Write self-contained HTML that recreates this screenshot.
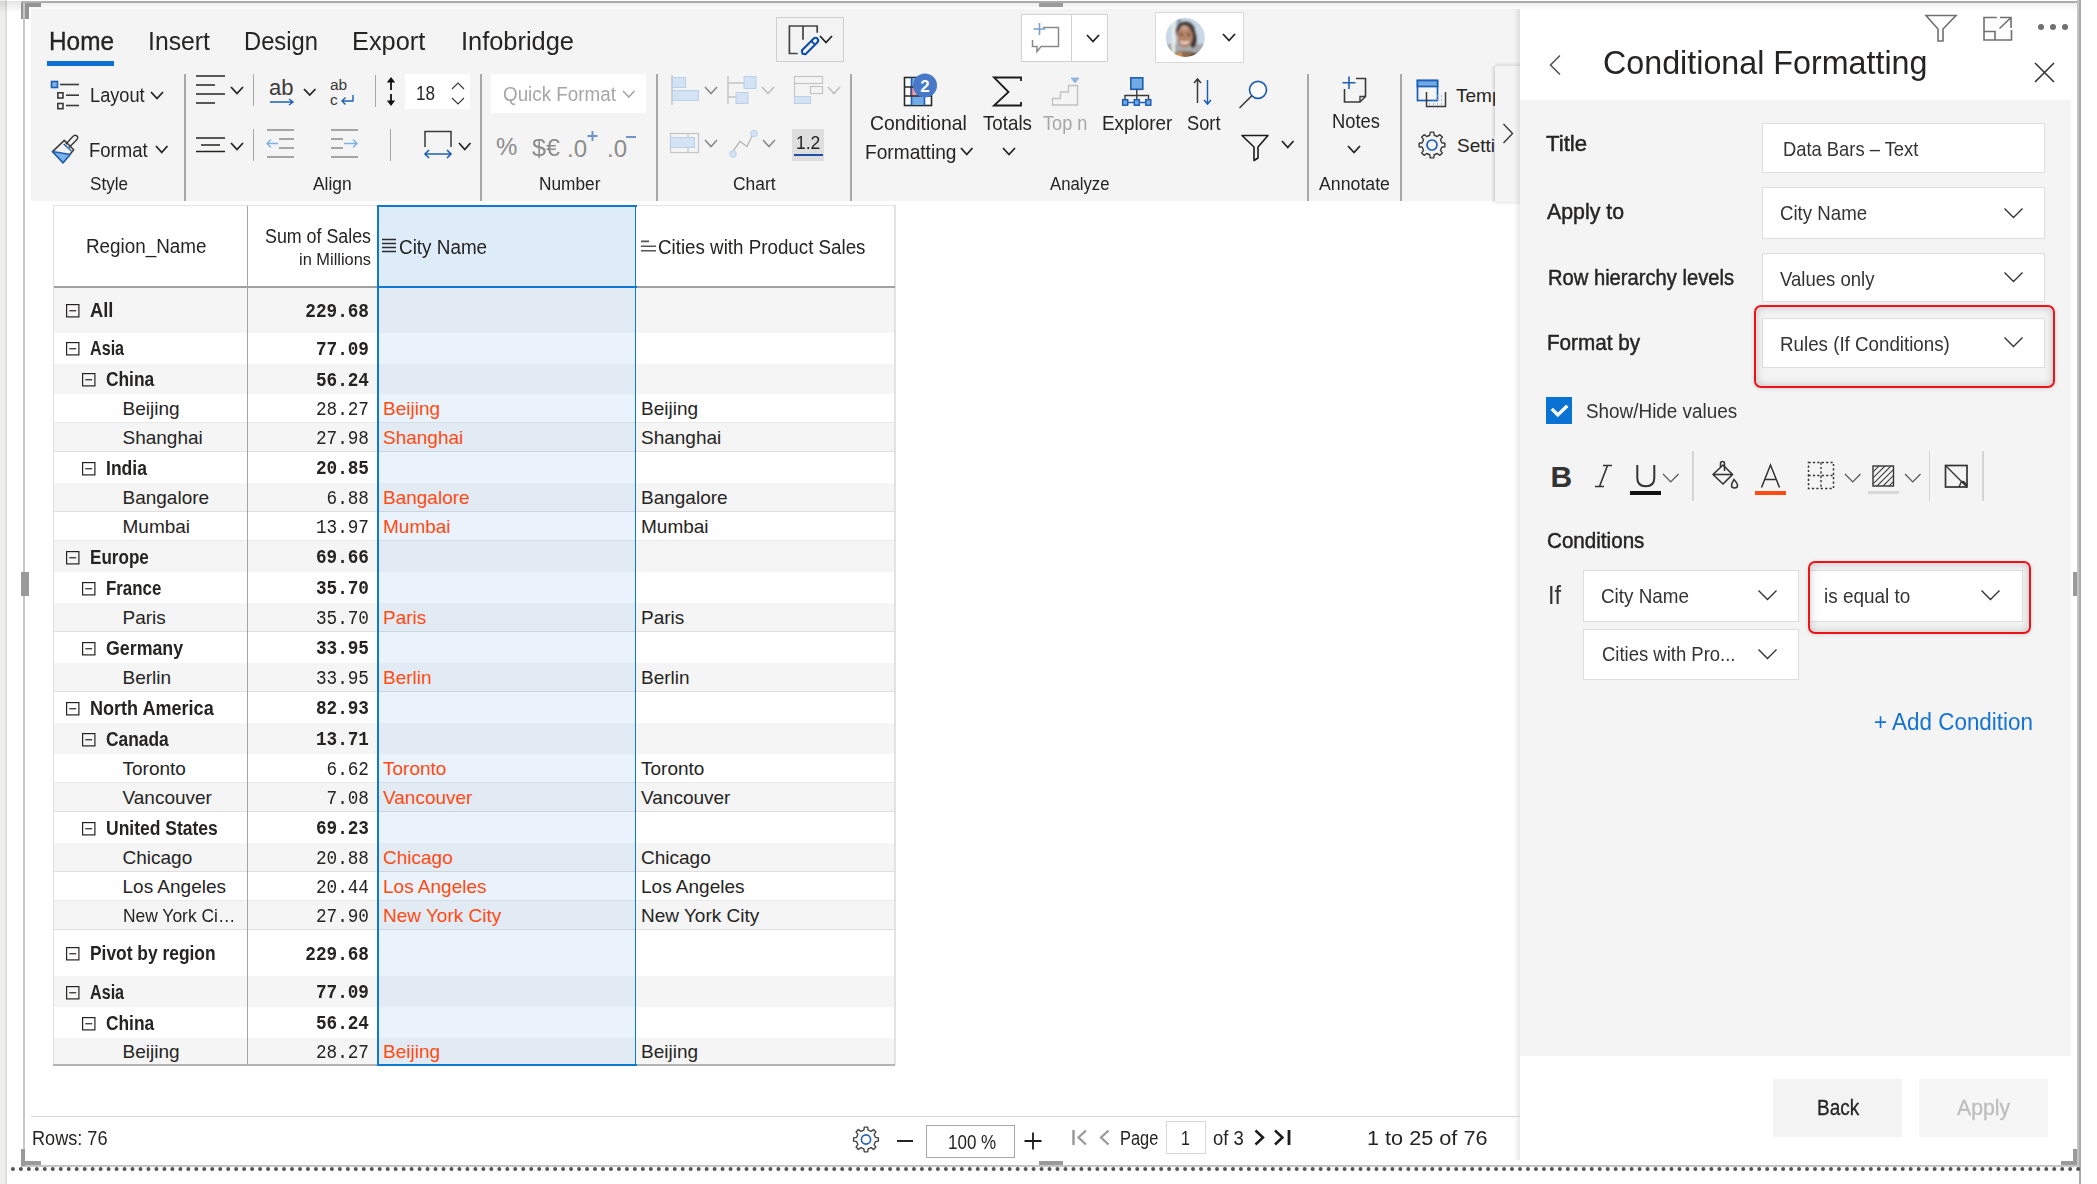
<!DOCTYPE html><html><head><meta charset="utf-8"><style>
html,body{margin:0;padding:0;}
body{width:2097px;height:1184px;position:relative;overflow:hidden;background:#fff;font-family:'Liberation Sans', sans-serif;color:#252423;}
.a{position:absolute;}
.t{position:absolute;white-space:nowrap;}
svg.a{overflow:visible;}
</style></head><body>
<div class="a" style="left:0px;top:0px;width:5px;height:1184px;background:#efeeec;"></div>
<div class="a" style="left:5px;top:0px;width:2px;height:1184px;background:#dedede;"></div>
<div class="a" style="left:21px;top:1px;width:2060px;height:2px;background:#ababab;"></div>
<div class="a" style="left:23px;top:3px;width:2px;height:1163px;background:#c8c8c8;"></div>
<div class="a" style="left:2077px;top:0px;width:2px;height:1165px;background:#c4c4c4;"></div>
<div class="a" style="left:2079px;top:0px;width:2px;height:1184px;background:#a9a9a9;"></div>
<div class="a" style="left:21px;top:1165px;width:2058px;height:2px;background:#c6c6c6;"></div>
<svg class="a" style="left:0;top:0" width="2097" height="1184" viewBox="0 0 2097 1184"><g fill="#555"><circle cx="12.90" cy="1169" r="2"/><circle cx="20.87" cy="1169" r="2"/><circle cx="28.85" cy="1169" r="2"/><circle cx="36.82" cy="1169" r="2"/><circle cx="44.80" cy="1169" r="2"/><circle cx="52.77" cy="1169" r="2"/><circle cx="60.74" cy="1169" r="2"/><circle cx="68.72" cy="1169" r="2"/><circle cx="76.69" cy="1169" r="2"/><circle cx="84.67" cy="1169" r="2"/><circle cx="92.64" cy="1169" r="2"/><circle cx="100.61" cy="1169" r="2"/><circle cx="108.59" cy="1169" r="2"/><circle cx="116.56" cy="1169" r="2"/><circle cx="124.54" cy="1169" r="2"/><circle cx="132.51" cy="1169" r="2"/><circle cx="140.48" cy="1169" r="2"/><circle cx="148.46" cy="1169" r="2"/><circle cx="156.43" cy="1169" r="2"/><circle cx="164.41" cy="1169" r="2"/><circle cx="172.38" cy="1169" r="2"/><circle cx="180.35" cy="1169" r="2"/><circle cx="188.33" cy="1169" r="2"/><circle cx="196.30" cy="1169" r="2"/><circle cx="204.28" cy="1169" r="2"/><circle cx="212.25" cy="1169" r="2"/><circle cx="220.22" cy="1169" r="2"/><circle cx="228.20" cy="1169" r="2"/><circle cx="236.17" cy="1169" r="2"/><circle cx="244.15" cy="1169" r="2"/><circle cx="252.12" cy="1169" r="2"/><circle cx="260.09" cy="1169" r="2"/><circle cx="268.07" cy="1169" r="2"/><circle cx="276.04" cy="1169" r="2"/><circle cx="284.02" cy="1169" r="2"/><circle cx="291.99" cy="1169" r="2"/><circle cx="299.96" cy="1169" r="2"/><circle cx="307.94" cy="1169" r="2"/><circle cx="315.91" cy="1169" r="2"/><circle cx="323.89" cy="1169" r="2"/><circle cx="331.86" cy="1169" r="2"/><circle cx="339.83" cy="1169" r="2"/><circle cx="347.81" cy="1169" r="2"/><circle cx="355.78" cy="1169" r="2"/><circle cx="363.76" cy="1169" r="2"/><circle cx="371.73" cy="1169" r="2"/><circle cx="379.70" cy="1169" r="2"/><circle cx="387.68" cy="1169" r="2"/><circle cx="395.65" cy="1169" r="2"/><circle cx="403.63" cy="1169" r="2"/><circle cx="411.60" cy="1169" r="2"/><circle cx="419.57" cy="1169" r="2"/><circle cx="427.55" cy="1169" r="2"/><circle cx="435.52" cy="1169" r="2"/><circle cx="443.50" cy="1169" r="2"/><circle cx="451.47" cy="1169" r="2"/><circle cx="459.44" cy="1169" r="2"/><circle cx="467.42" cy="1169" r="2"/><circle cx="475.39" cy="1169" r="2"/><circle cx="483.37" cy="1169" r="2"/><circle cx="491.34" cy="1169" r="2"/><circle cx="499.31" cy="1169" r="2"/><circle cx="507.29" cy="1169" r="2"/><circle cx="515.26" cy="1169" r="2"/><circle cx="523.24" cy="1169" r="2"/><circle cx="531.21" cy="1169" r="2"/><circle cx="539.18" cy="1169" r="2"/><circle cx="547.16" cy="1169" r="2"/><circle cx="555.13" cy="1169" r="2"/><circle cx="563.11" cy="1169" r="2"/><circle cx="571.08" cy="1169" r="2"/><circle cx="579.05" cy="1169" r="2"/><circle cx="587.03" cy="1169" r="2"/><circle cx="595.00" cy="1169" r="2"/><circle cx="602.98" cy="1169" r="2"/><circle cx="610.95" cy="1169" r="2"/><circle cx="618.92" cy="1169" r="2"/><circle cx="626.90" cy="1169" r="2"/><circle cx="634.87" cy="1169" r="2"/><circle cx="642.85" cy="1169" r="2"/><circle cx="650.82" cy="1169" r="2"/><circle cx="658.79" cy="1169" r="2"/><circle cx="666.77" cy="1169" r="2"/><circle cx="674.74" cy="1169" r="2"/><circle cx="682.72" cy="1169" r="2"/><circle cx="690.69" cy="1169" r="2"/><circle cx="698.66" cy="1169" r="2"/><circle cx="706.64" cy="1169" r="2"/><circle cx="714.61" cy="1169" r="2"/><circle cx="722.59" cy="1169" r="2"/><circle cx="730.56" cy="1169" r="2"/><circle cx="738.53" cy="1169" r="2"/><circle cx="746.51" cy="1169" r="2"/><circle cx="754.48" cy="1169" r="2"/><circle cx="762.46" cy="1169" r="2"/><circle cx="770.43" cy="1169" r="2"/><circle cx="778.40" cy="1169" r="2"/><circle cx="786.38" cy="1169" r="2"/><circle cx="794.35" cy="1169" r="2"/><circle cx="802.33" cy="1169" r="2"/><circle cx="810.30" cy="1169" r="2"/><circle cx="818.27" cy="1169" r="2"/><circle cx="826.25" cy="1169" r="2"/><circle cx="834.22" cy="1169" r="2"/><circle cx="842.20" cy="1169" r="2"/><circle cx="850.17" cy="1169" r="2"/><circle cx="858.14" cy="1169" r="2"/><circle cx="866.12" cy="1169" r="2"/><circle cx="874.09" cy="1169" r="2"/><circle cx="882.07" cy="1169" r="2"/><circle cx="890.04" cy="1169" r="2"/><circle cx="898.01" cy="1169" r="2"/><circle cx="905.99" cy="1169" r="2"/><circle cx="913.96" cy="1169" r="2"/><circle cx="921.94" cy="1169" r="2"/><circle cx="929.91" cy="1169" r="2"/><circle cx="937.88" cy="1169" r="2"/><circle cx="945.86" cy="1169" r="2"/><circle cx="953.83" cy="1169" r="2"/><circle cx="961.81" cy="1169" r="2"/><circle cx="969.78" cy="1169" r="2"/><circle cx="977.75" cy="1169" r="2"/><circle cx="985.73" cy="1169" r="2"/><circle cx="993.70" cy="1169" r="2"/><circle cx="1001.68" cy="1169" r="2"/><circle cx="1009.65" cy="1169" r="2"/><circle cx="1017.62" cy="1169" r="2"/><circle cx="1025.60" cy="1169" r="2"/><circle cx="1033.57" cy="1169" r="2"/><circle cx="1041.55" cy="1169" r="2"/><circle cx="1049.52" cy="1169" r="2"/><circle cx="1057.49" cy="1169" r="2"/><circle cx="1065.47" cy="1169" r="2"/><circle cx="1073.44" cy="1169" r="2"/><circle cx="1081.42" cy="1169" r="2"/><circle cx="1089.39" cy="1169" r="2"/><circle cx="1097.36" cy="1169" r="2"/><circle cx="1105.34" cy="1169" r="2"/><circle cx="1113.31" cy="1169" r="2"/><circle cx="1121.29" cy="1169" r="2"/><circle cx="1129.26" cy="1169" r="2"/><circle cx="1137.23" cy="1169" r="2"/><circle cx="1145.21" cy="1169" r="2"/><circle cx="1153.18" cy="1169" r="2"/><circle cx="1161.16" cy="1169" r="2"/><circle cx="1169.13" cy="1169" r="2"/><circle cx="1177.10" cy="1169" r="2"/><circle cx="1185.08" cy="1169" r="2"/><circle cx="1193.05" cy="1169" r="2"/><circle cx="1201.03" cy="1169" r="2"/><circle cx="1209.00" cy="1169" r="2"/><circle cx="1216.97" cy="1169" r="2"/><circle cx="1224.95" cy="1169" r="2"/><circle cx="1232.92" cy="1169" r="2"/><circle cx="1240.90" cy="1169" r="2"/><circle cx="1248.87" cy="1169" r="2"/><circle cx="1256.84" cy="1169" r="2"/><circle cx="1264.82" cy="1169" r="2"/><circle cx="1272.79" cy="1169" r="2"/><circle cx="1280.77" cy="1169" r="2"/><circle cx="1288.74" cy="1169" r="2"/><circle cx="1296.71" cy="1169" r="2"/><circle cx="1304.69" cy="1169" r="2"/><circle cx="1312.66" cy="1169" r="2"/><circle cx="1320.64" cy="1169" r="2"/><circle cx="1328.61" cy="1169" r="2"/><circle cx="1336.58" cy="1169" r="2"/><circle cx="1344.56" cy="1169" r="2"/><circle cx="1352.53" cy="1169" r="2"/><circle cx="1360.51" cy="1169" r="2"/><circle cx="1368.48" cy="1169" r="2"/><circle cx="1376.45" cy="1169" r="2"/><circle cx="1384.43" cy="1169" r="2"/><circle cx="1392.40" cy="1169" r="2"/><circle cx="1400.38" cy="1169" r="2"/><circle cx="1408.35" cy="1169" r="2"/><circle cx="1416.32" cy="1169" r="2"/><circle cx="1424.30" cy="1169" r="2"/><circle cx="1432.27" cy="1169" r="2"/><circle cx="1440.25" cy="1169" r="2"/><circle cx="1448.22" cy="1169" r="2"/><circle cx="1456.19" cy="1169" r="2"/><circle cx="1464.17" cy="1169" r="2"/><circle cx="1472.14" cy="1169" r="2"/><circle cx="1480.12" cy="1169" r="2"/><circle cx="1488.09" cy="1169" r="2"/><circle cx="1496.06" cy="1169" r="2"/><circle cx="1504.04" cy="1169" r="2"/><circle cx="1512.01" cy="1169" r="2"/><circle cx="1519.99" cy="1169" r="2"/><circle cx="1527.96" cy="1169" r="2"/><circle cx="1535.93" cy="1169" r="2"/><circle cx="1543.91" cy="1169" r="2"/><circle cx="1551.88" cy="1169" r="2"/><circle cx="1559.86" cy="1169" r="2"/><circle cx="1567.83" cy="1169" r="2"/><circle cx="1575.80" cy="1169" r="2"/><circle cx="1583.78" cy="1169" r="2"/><circle cx="1591.75" cy="1169" r="2"/><circle cx="1599.73" cy="1169" r="2"/><circle cx="1607.70" cy="1169" r="2"/><circle cx="1615.67" cy="1169" r="2"/><circle cx="1623.65" cy="1169" r="2"/><circle cx="1631.62" cy="1169" r="2"/><circle cx="1639.60" cy="1169" r="2"/><circle cx="1647.57" cy="1169" r="2"/><circle cx="1655.54" cy="1169" r="2"/><circle cx="1663.52" cy="1169" r="2"/><circle cx="1671.49" cy="1169" r="2"/><circle cx="1679.47" cy="1169" r="2"/><circle cx="1687.44" cy="1169" r="2"/><circle cx="1695.41" cy="1169" r="2"/><circle cx="1703.39" cy="1169" r="2"/><circle cx="1711.36" cy="1169" r="2"/><circle cx="1719.34" cy="1169" r="2"/><circle cx="1727.31" cy="1169" r="2"/><circle cx="1735.28" cy="1169" r="2"/><circle cx="1743.26" cy="1169" r="2"/><circle cx="1751.23" cy="1169" r="2"/><circle cx="1759.21" cy="1169" r="2"/><circle cx="1767.18" cy="1169" r="2"/><circle cx="1775.15" cy="1169" r="2"/><circle cx="1783.13" cy="1169" r="2"/><circle cx="1791.10" cy="1169" r="2"/><circle cx="1799.08" cy="1169" r="2"/><circle cx="1807.05" cy="1169" r="2"/><circle cx="1815.02" cy="1169" r="2"/><circle cx="1823.00" cy="1169" r="2"/><circle cx="1830.97" cy="1169" r="2"/><circle cx="1838.95" cy="1169" r="2"/><circle cx="1846.92" cy="1169" r="2"/><circle cx="1854.89" cy="1169" r="2"/><circle cx="1862.87" cy="1169" r="2"/><circle cx="1870.84" cy="1169" r="2"/><circle cx="1878.82" cy="1169" r="2"/><circle cx="1886.79" cy="1169" r="2"/><circle cx="1894.76" cy="1169" r="2"/><circle cx="1902.74" cy="1169" r="2"/><circle cx="1910.71" cy="1169" r="2"/><circle cx="1918.69" cy="1169" r="2"/><circle cx="1926.66" cy="1169" r="2"/><circle cx="1934.63" cy="1169" r="2"/><circle cx="1942.61" cy="1169" r="2"/><circle cx="1950.58" cy="1169" r="2"/><circle cx="1958.56" cy="1169" r="2"/><circle cx="1966.53" cy="1169" r="2"/><circle cx="1974.50" cy="1169" r="2"/><circle cx="1982.48" cy="1169" r="2"/><circle cx="1990.45" cy="1169" r="2"/><circle cx="1998.43" cy="1169" r="2"/><circle cx="2006.40" cy="1169" r="2"/><circle cx="2014.37" cy="1169" r="2"/><circle cx="2022.35" cy="1169" r="2"/><circle cx="2030.32" cy="1169" r="2"/><circle cx="2038.30" cy="1169" r="2"/><circle cx="2046.27" cy="1169" r="2"/><circle cx="2054.24" cy="1169" r="2"/><circle cx="2062.22" cy="1169" r="2"/><circle cx="2070.19" cy="1169" r="2"/><circle cx="2078.17" cy="1169" r="2"/></g></svg>
<div class="a" style="left:31px;top:9px;width:1489px;height:192px;background:#f4f4f4;"></div>
<div class="t" style="top:28.40px;font-size:26px;line-height:26px;color:#252423;left:48.5px;transform:scaleX(0.9370);transform-origin:0 0;-webkit-text-stroke:0.35px #252423;">Home</div>
<div class="a" style="left:47px;top:61px;width:67px;height:5px;background:#0f6fd0;"></div>
<div class="t" style="top:28.40px;font-size:26px;line-height:26px;color:#252423;left:147.8px;transform:scaleX(0.9535);transform-origin:0 0;">Insert</div>
<div class="t" style="top:28.40px;font-size:26px;line-height:26px;color:#252423;left:244.4px;transform:scaleX(0.9130);transform-origin:0 0;">Design</div>
<div class="t" style="top:28.40px;font-size:26px;line-height:26px;color:#252423;left:352.4px;transform:scaleX(0.9742);transform-origin:0 0;">Export</div>
<div class="t" style="top:28.40px;font-size:26px;line-height:26px;color:#252423;left:461.0px;transform:scaleX(0.9771);transform-origin:0 0;">Infobridge</div>
<div class="t" style="top:175.25px;font-size:18.3px;line-height:18.3px;color:#252423;left:90.0px;transform:scaleX(0.9341);transform-origin:0 0;">Style</div>
<div class="t" style="top:174.84px;font-size:18.3px;line-height:18.3px;color:#252423;left:313.3px;transform:scaleX(0.9509);transform-origin:0 0;">Align</div>
<div class="t" style="top:174.75px;font-size:18.3px;line-height:18.3px;color:#252423;left:538.5px;transform:scaleX(0.9448);transform-origin:0 0;">Number</div>
<div class="t" style="top:174.84px;font-size:18.3px;line-height:18.3px;color:#252423;left:733.0px;transform:scaleX(0.9521);transform-origin:0 0;">Chart</div>
<div class="t" style="top:174.84px;font-size:18.3px;line-height:18.3px;color:#252423;left:1049.5px;transform:scaleX(0.9138);transform-origin:0 0;">Analyze</div>
<div class="t" style="top:175.25px;font-size:18.3px;line-height:18.3px;color:#252423;left:1319.0px;transform:scaleX(0.9692);transform-origin:0 0;">Annotate</div>
<div class="a" style="left:184px;top:74px;width:2px;height:127px;background:#a8a8a8;"></div>
<div class="a" style="left:480px;top:74px;width:2px;height:127px;background:#a8a8a8;"></div>
<div class="a" style="left:656px;top:74px;width:2px;height:127px;background:#a8a8a8;"></div>
<div class="a" style="left:850px;top:74px;width:2px;height:127px;background:#a8a8a8;"></div>
<div class="a" style="left:1307px;top:74px;width:2px;height:127px;background:#a8a8a8;"></div>
<div class="a" style="left:1400px;top:74px;width:2px;height:127px;background:#a8a8a8;"></div>
<svg class="a" style="left:49px;top:78px;" width="34" height="34" viewBox="0 0 34 34" fill="none">
<rect x="2.5" y="3.5" width="6" height="6" fill="#7bb2ea" stroke="#1e5fb3" stroke-width="1.6"/>
<path d="M11 6.5 H30" stroke="#3b3a39" stroke-width="1.6"/>
<rect x="8.8" y="14.8" width="5.2" height="5.2" stroke="#3b3a39" stroke-width="1.6"/>
<path d="M17 17.2 H30" stroke="#3b3a39" stroke-width="1.6"/>
<rect x="8.8" y="25.5" width="5.2" height="5.2" stroke="#3b3a39" stroke-width="1.6"/>
<path d="M17 27.5 H30" stroke="#3b3a39" stroke-width="1.6"/>
</svg>
<div class="t" style="top:86.06px;font-size:19.7px;line-height:19.7px;color:#252423;left:90.3px;transform:scaleX(0.9249);transform-origin:0 0;">Layout</div>
<svg class="a" style="left:149.5px;top:91px;" width="14" height="8.5" viewBox="0 0 14 8.5" fill="none"><path d="M1 1 L7.0 7.5 L13 1" stroke="#252423" stroke-width="1.8"/></svg>
<svg class="a" style="left:48px;top:134px;" width="34" height="34" viewBox="0 0 34 34" fill="none">
<path d="M4.5 17.6 L16.3 6.4 L25.7 15.8 L15 28.8 Z" fill="none" stroke="#3b3a39" stroke-width="1.5" stroke-linejoin="round"/>
<path d="M4.5 17.6 L22.2 20.6 L15 28.8 Z" fill="#7bb2ea" stroke="#1e5fb3" stroke-width="1.5" stroke-linejoin="round"/>
<path d="M15.7 10 L23.4 17" stroke="#1e5fb3" stroke-width="1.5"/>
<path d="M21 13.5 L28.5 6 Q30.8 3.6 28.8 1.9 Q27 0.2 24.8 2.5 L17.8 10.2" stroke="#3b3a39" stroke-width="1.5" fill="none"/>
</svg>
<div class="t" style="top:141.06px;font-size:19.7px;line-height:19.7px;color:#252423;left:88.9px;transform:scaleX(0.9409);transform-origin:0 0;">Format</div>
<svg class="a" style="left:155px;top:144.5px;" width="13.5" height="8.5" viewBox="0 0 13.5 8.5" fill="none"><path d="M1 1 L6.75 7.5 L12.5 1" stroke="#252423" stroke-width="1.8"/></svg>
<svg class="a" style="left:195px;top:74px;" width="30" height="32" viewBox="0 0 30 32" fill="none"><path d="M1 2 H30 M1 11 H20 M1 20 H30 M1 29 H20" stroke="#252423" stroke-width="1.6"/></svg>
<svg class="a" style="left:230px;top:86px;" width="14" height="8.5" viewBox="0 0 14 8.5" fill="none"><path d="M1 1 L7.0 7.5 L13 1" stroke="#252423" stroke-width="1.8"/></svg>
<svg class="a" style="left:195px;top:136px;" width="30" height="18" viewBox="0 0 30 18" fill="none"><path d="M1 2 H30 M6 9 H25 M1 15.5 H30" stroke="#252423" stroke-width="1.6"/></svg>
<svg class="a" style="left:230px;top:141.5px;" width="14" height="8.5" viewBox="0 0 14 8.5" fill="none"><path d="M1 1 L7.0 7.5 L13 1" stroke="#252423" stroke-width="1.8"/></svg>
<div class="a" style="left:253px;top:74px;width:1px;height:32px;background:#a8a8a8;"></div>
<div class="a" style="left:253px;top:129px;width:1px;height:32px;background:#a8a8a8;"></div>
<div class="t" style="top:76.80px;font-size:22px;line-height:22px;color:#3b3a39;left:269px;">ab</div>
<svg class="a" style="left:269px;top:98px;" width="27" height="8" viewBox="0 0 27 8" fill="none"><path d="M1 4 H24 M20 1 L24 4 L20 7" stroke="#1e5fb3" stroke-width="1.4" fill="none"/></svg>
<svg class="a" style="left:303px;top:87.5px;" width="13.5" height="8" viewBox="0 0 13.5 8" fill="none"><path d="M1 1 L6.75 7 L12.5 1" stroke="#252423" stroke-width="1.8"/></svg>
<div class="t" style="top:76.83px;font-size:15.5px;line-height:15.5px;color:#3b3a39;left:330px;">ab</div>
<div class="t" style="top:91.83px;font-size:15.5px;line-height:15.5px;color:#3b3a39;left:330px;">c</div>
<svg class="a" style="left:340px;top:94px;" width="16" height="12" viewBox="0 0 16 12" fill="none"><path d="M13 1 V7 H2 M5.5 3.5 L2 7 L5.5 10.5" stroke="#1e5fb3" stroke-width="1.4" fill="none"/></svg>
<div class="a" style="left:375px;top:75px;width:1px;height:32px;background:#a8a8a8;"></div>
<svg class="a" style="left:385px;top:76px;" width="12" height="32" viewBox="0 0 12 32" fill="none"><path d="M6 3 V14 M6 18 V28" stroke="#111" stroke-width="1.8" fill="none"/><path d="M1.8 6.5 L6 1 L10.2 6.5 Z M1.8 24.5 L6 30 L10.2 24.5 Z" fill="#111"/></svg>
<div class="a" style="left:405px;top:74px;width:65px;height:35px;background:#ffffff;"></div>
<div class="t" style="top:82.80px;font-size:20px;line-height:20px;color:#252423;left:416.0px;transform:scaleX(0.8543);transform-origin:0 0;">18</div>
<svg class="a" style="left:451px;top:81px;" width="15" height="25" viewBox="0 0 15 25" fill="none"><path d="M1 8 L7 2 L13 8 M1 17 L7 23 L13 17" stroke="#3b3a39" stroke-width="1.2" fill="none"/></svg>
<svg class="a" style="left:265px;top:128px;" width="32" height="34" viewBox="0 0 32 34" fill="none">
<path d="M2 2 H29 M14 11 H29 M14 20 H29 M2 29 H29" stroke="#8a8a8a" stroke-width="1.4"/>
<path d="M13 15.5 H2 M6 11.5 L2 15.5 L6 19.5" stroke="#7bb2ea" stroke-width="1.4" fill="none"/>
</svg>
<svg class="a" style="left:329px;top:128px;" width="32" height="34" viewBox="0 0 32 34" fill="none">
<path d="M2 2 H29 M2 11 H14 M2 20 H14 M2 29 H29" stroke="#8a8a8a" stroke-width="1.4"/>
<path d="M15 15.5 H28 M24 11.5 L28 15.5 L24 19.5" stroke="#7bb2ea" stroke-width="1.4" fill="none"/>
</svg>
<div class="a" style="left:390px;top:129px;width:1px;height:32px;background:#a8a8a8;"></div>
<svg class="a" style="left:422px;top:129px;" width="32" height="32" viewBox="0 0 32 32" fill="none">
<path d="M3 18 V2.5 H29 V18" stroke="#3b3a39" stroke-width="1.5" fill="none"/>
<path d="M3 25 H29 M7 21 L3 25 L7 29 M25 21 L29 25 L25 29" stroke="#1e5fb3" stroke-width="1.6" fill="none"/>
</svg>
<svg class="a" style="left:457.5px;top:141.5px;" width="13.5" height="8.5" viewBox="0 0 13.5 8.5" fill="none"><path d="M1 1 L6.75 7.5 L12.5 1" stroke="#252423" stroke-width="1.8"/></svg>
<div class="a" style="left:491px;top:74px;width:155px;height:38.5px;background:#ffffff;"></div>
<div class="t" style="top:84.85px;font-size:19.7px;line-height:19.7px;color:#a6a6a6;left:503.0px;transform:scaleX(0.9558);transform-origin:0 0;">Quick Format</div>
<svg class="a" style="left:622px;top:90px;" width="13.5" height="8" viewBox="0 0 13.5 8" fill="none"><path d="M1 1 L6.75 7 L12.5 1" stroke="#a6a6a6" stroke-width="1.6"/></svg>
<div class="t" style="top:134.60px;font-size:24px;line-height:24px;color:#8c8c8c;left:496px;">%</div>
<div class="t" style="top:135.90px;font-size:24px;line-height:24px;color:#8c8c8c;left:532.0px;transform:scaleX(1.0492);transform-origin:0 0;">$€</div>
<div class="t" style="top:136.60px;font-size:24px;line-height:24px;color:#8c8c8c;left:567px;">.0</div>
<svg class="a" style="left:586px;top:130px;" width="14" height="14" viewBox="0 0 14 14" fill="none"><path d="M6.5 1 V11 M1.5 6 H11.5" stroke="#6f95c8" stroke-width="2"/></svg>
<div class="t" style="top:136.60px;font-size:24px;line-height:24px;color:#8c8c8c;left:607px;">.0</div>
<div class="a" style="left:626px;top:136px;width:10px;height:2px;background:#6f95c8;"></div>
<svg class="a" style="left:670px;top:74px;" width="32" height="32" viewBox="0 0 32 32" fill="none">
<path d="M2 1 V31" stroke="#c4c4c4" stroke-width="1.4"/>
<rect x="2.5" y="3.5" width="13" height="10" fill="#d4e3f4" stroke="#b9cfea" stroke-width="1"/>
<rect x="2.5" y="16.5" width="26" height="10" fill="#d4e3f4" stroke="#b9cfea" stroke-width="1"/>
</svg>
<svg class="a" style="left:704px;top:86px;" width="14" height="8.5" viewBox="0 0 14 8.5" fill="none"><path d="M1 1 L7.0 7.5 L13 1" stroke="#8a8a8a" stroke-width="1.6"/></svg>
<svg class="a" style="left:726px;top:74px;" width="32" height="32" viewBox="0 0 32 32" fill="none">
<path d="M2 2 V30 M2 9 H18 M2 23 H10" stroke="#c4c4c4" stroke-width="1.4"/>
<rect x="18" y="2.5" width="12" height="12" fill="#d4e3f4" stroke="#b9cfea" stroke-width="1"/>
<rect x="10" y="18.5" width="12" height="11" fill="#d4e3f4" stroke="#b9cfea" stroke-width="1"/>
</svg>
<svg class="a" style="left:761px;top:86px;" width="14" height="8.5" viewBox="0 0 14 8.5" fill="none"><path d="M1 1 L7.0 7.5 L13 1" stroke="#c0c0c0" stroke-width="1.6"/></svg>
<svg class="a" style="left:793px;top:74px;" width="32" height="32" viewBox="0 0 32 32" fill="none">
<rect x="1.5" y="2.5" width="28" height="7" stroke="#c4c4c4" stroke-width="1.2"/>
<rect x="17.5" y="12.5" width="12" height="7" stroke="#c4c4c4" stroke-width="1.2"/>
<path d="M1.5 9 V30" stroke="#c4c4c4" stroke-width="1.2"/>
<rect x="1.5" y="22.5" width="16" height="7" fill="#d4e3f4" stroke="#b9cfea" stroke-width="1"/>
</svg>
<svg class="a" style="left:827px;top:86px;" width="14" height="8.5" viewBox="0 0 14 8.5" fill="none"><path d="M1 1 L7.0 7.5 L13 1" stroke="#c0c0c0" stroke-width="1.6"/></svg>
<svg class="a" style="left:669px;top:131px;" width="34" height="26" viewBox="0 0 34 26" fill="none">
<rect x="1.5" y="2.5" width="28" height="19" stroke="#c4c4c4" stroke-width="1.2"/>
<path d="M19 2.5 V21.5" stroke="#c4c4c4" stroke-width="1.2"/>
<rect x="1.5" y="6.5" width="24" height="10" fill="#d4e3f4" stroke="#b9cfea" stroke-width="1"/>
</svg>
<svg class="a" style="left:704px;top:138.5px;" width="14" height="8.5" viewBox="0 0 14 8.5" fill="none"><path d="M1 1 L7.0 7.5 L13 1" stroke="#8a8a8a" stroke-width="1.6"/></svg>
<svg class="a" style="left:727px;top:127px;" width="34" height="34" viewBox="0 0 34 34" fill="none">
<path d="M6 24 L13 14.5 L20 19.5 L26 7" stroke="#b8b8b8" stroke-width="1.3" fill="none"/>
<circle cx="6" cy="27" r="3.3" fill="#d4e3f4" stroke="#b9cfea" stroke-width="1"/>
<circle cx="27" cy="6.5" r="3.3" fill="#d4e3f4" stroke="#b9cfea" stroke-width="1"/>
</svg>
<svg class="a" style="left:762px;top:139px;" width="14" height="8.5" viewBox="0 0 14 8.5" fill="none"><path d="M1 1 L7.0 7.5 L13 1" stroke="#8a8a8a" stroke-width="1.6"/></svg>
<div class="a" style="left:792px;top:129px;width:32px;height:32px;background:#dedede;"></div>
<div class="t" style="top:133.35px;font-size:19px;line-height:19px;color:#252423;left:795.7px;transform:scaleX(0.9201);transform-origin:0 0;">1.2</div>
<div class="a" style="left:794px;top:154px;width:29px;height:2px;background:#1e4fa8;"></div>
<svg class="a" style="left:902px;top:74px;" width="36" height="36" viewBox="0 0 36 36" fill="none">
<rect x="2.5" y="3.5" width="27" height="28" fill="#fff" stroke="#2b2b2b" stroke-width="1.6"/>
<rect x="9" y="4" width="14" height="27" fill="#72aae6"/>
<rect x="9" y="13" width="5" height="9" fill="#f4a0a0"/>
<path d="M9 13 V22" stroke="#e03030" stroke-width="1.6"/>
<path d="M9.5 3.5 V31.5 M22.5 3.5 V31.5" stroke="#1e5fb3" stroke-width="1.6"/>
<path d="M2.5 13 H29.5 M2.5 22 H29.5" stroke="#2b2b2b" stroke-width="1.4"/>
<circle cx="23" cy="11.6" r="12" fill="#4878c8"/>
<text x="23" y="17.5" font-family="Liberation Sans" font-weight="700" font-size="17" fill="#fff" text-anchor="middle">2</text>
</svg>
<div class="t" style="top:113.67px;font-size:19.8px;line-height:19.8px;color:#252423;left:870.0px;transform:scaleX(0.9772);transform-origin:0 0;">Conditional</div>
<div class="t" style="top:142.97px;font-size:19.8px;line-height:19.8px;color:#252423;left:864.5px;transform:scaleX(0.9670);transform-origin:0 0;">Formatting</div>
<svg class="a" style="left:960px;top:147px;" width="13.5" height="8.5" viewBox="0 0 13.5 8.5" fill="none"><path d="M1 1 L6.75 7.5 L12.5 1" stroke="#252423" stroke-width="1.8"/></svg>
<svg class="a" style="left:991px;top:75px;" width="34" height="34" viewBox="0 0 34 34" fill="none"><path d="M30 6 V2.5 H3 L17.5 17 L3 30.5 H30 V27" stroke="#1b1b1b" stroke-width="1.8" fill="none"/></svg>
<div class="t" style="top:113.67px;font-size:19.8px;line-height:19.8px;color:#252423;left:983.0px;transform:scaleX(0.9475);transform-origin:0 0;">Totals</div>
<svg class="a" style="left:1002px;top:147px;" width="14" height="8.5" viewBox="0 0 14 8.5" fill="none"><path d="M1 1 L7.0 7.5 L13 1" stroke="#252423" stroke-width="1.8"/></svg>
<svg class="a" style="left:1050px;top:75px;" width="32" height="32" viewBox="0 0 32 32" fill="none">
<path d="M2.5 30 V23.5 H10.5 V17 H18.5 V10.5 H27.5 V30 Z" stroke="#c0c0c0" stroke-width="1.3" fill="none"/>
<path d="M21 3 H29 L25 8 Z" fill="#8fb4e3" stroke="#8fb4e3" stroke-width="0.8"/>
</svg>
<div class="t" style="top:113.67px;font-size:19.8px;line-height:19.8px;color:#a6a6a6;left:1043.0px;transform:scaleX(0.9188);transform-origin:0 0;">Top n</div>
<svg class="a" style="left:1120px;top:75px;" width="34" height="34" viewBox="0 0 34 34" fill="none">
<rect x="10.8" y="2.8" width="12" height="11.5" fill="#72aae6" stroke="#1e5fb3" stroke-width="1.6"/>
<path d="M16.8 14.3 V27 M5 27 V20.5 H28.5 V27" stroke="#3b3a39" stroke-width="1.4" fill="none"/>
<rect x="2.7" y="24.7" width="5" height="5.5" fill="#72aae6" stroke="#1e5fb3" stroke-width="1.5"/>
<rect x="14.3" y="24.7" width="5" height="5.5" fill="#72aae6" stroke="#1e5fb3" stroke-width="1.5"/>
<rect x="25.8" y="24.7" width="5" height="5.5" fill="#72aae6" stroke="#1e5fb3" stroke-width="1.5"/>
<path d="M7.7 27.5 H14.3 M19.3 27.5 H25.8" stroke="#1e5fb3" stroke-width="1.4"/>
</svg>
<div class="t" style="top:113.67px;font-size:19.8px;line-height:19.8px;color:#252423;left:1102.4px;transform:scaleX(0.9548);transform-origin:0 0;">Explorer</div>
<svg class="a" style="left:1190px;top:76px;" width="26" height="30" viewBox="0 0 26 30" fill="none">
<path d="M7.5 27 V3 M4 7 L7.5 3 L11 7" stroke="#3b3a39" stroke-width="1.5" fill="none"/>
<path d="M17.5 4 V28 M14 24 L17.5 28 L21 24" stroke="#1e5fb3" stroke-width="1.5" fill="none"/>
</svg>
<div class="t" style="top:113.67px;font-size:19.8px;line-height:19.8px;color:#252423;left:1186.5px;transform:scaleX(0.9225);transform-origin:0 0;">Sort</div>
<svg class="a" style="left:1236px;top:78px;" width="34" height="34" viewBox="0 0 34 34" fill="none">
<circle cx="22" cy="11.8" r="8.5" stroke="#1e5fb3" stroke-width="1.7" fill="#fff"/>
<path d="M15.8 17.8 L3.5 30" stroke="#3b3a39" stroke-width="1.6"/>
</svg>
<svg class="a" style="left:1240px;top:133px;" width="30" height="30" viewBox="0 0 30 30" fill="none"><path d="M2 2.5 H28 L18 14 V25 L14 27.5 V14 Z" stroke="#1b1b1b" stroke-width="1.6" fill="none" stroke-linejoin="round"/></svg>
<svg class="a" style="left:1280.5px;top:139.5px;" width="13.5" height="8.5" viewBox="0 0 13.5 8.5" fill="none"><path d="M1 1 L6.75 7.5 L12.5 1" stroke="#252423" stroke-width="1.8"/></svg>
<svg class="a" style="left:1340px;top:75px;" width="30" height="30" viewBox="0 0 30 30" fill="none">
<path d="M16 3.5 H25.5 V21.5 L20 27 H4.5 V14" stroke="#3b3a39" stroke-width="1.6" fill="none"/>
<path d="M25.5 21.5 H20 V27" stroke="#3b3a39" stroke-width="1.4" fill="none"/>
<path d="M9 1.5 V14 M2.5 7.8 H15.5" stroke="#1e5fb3" stroke-width="1.6"/>
</svg>
<div class="t" style="top:111.77px;font-size:19.8px;line-height:19.8px;color:#252423;left:1332.0px;transform:scaleX(0.9281);transform-origin:0 0;">Notes</div>
<svg class="a" style="left:1347px;top:145px;" width="14" height="8.5" viewBox="0 0 14 8.5" fill="none"><path d="M1 1 L7.0 7.5 L13 1" stroke="#252423" stroke-width="1.8"/></svg>
<svg class="a" style="left:1415px;top:78px;" width="34" height="32" viewBox="0 0 34 32" fill="none">
<rect x="2.5" y="2.5" width="20" height="20" fill="none" stroke="#1e5fb3" stroke-width="1.7"/>
<rect x="2.5" y="2.5" width="20" height="6" fill="#72aae6" stroke="#1e5fb3" stroke-width="1.7"/>
<path d="M11.5 14 V28.5 H30.5 V14" stroke="#3b3a39" stroke-width="1.5" fill="none"/>
<path d="M14 26 h1 M18 26 h1 M22 26 h1 M26 26 h1 M18 22 h1 M22 22 h1 M26 22 h1 M22 18 h1 M26 18 h1" stroke="#72aae6" stroke-width="1.5"/>
</svg>
<div class="t" style="top:85.65px;font-size:19px;line-height:19px;color:#252423;left:1456px;">Temp</div>
<svg class="a" style="left:1417px;top:130px;" width="30" height="30" viewBox="0 0 30 30" fill="none">
<path d="M24.74 12.74 L27.88 13.27 L27.88 16.73 L24.74 17.26 L23.49 20.29 L25.33 22.89 L22.89 25.33 L20.29 23.49 L17.26 24.74 L16.73 27.88 L13.27 27.88 L12.74 24.74 L9.71 23.49 L7.11 25.33 L4.67 22.89 L6.51 20.29 L5.26 17.26 L2.12 16.73 L2.12 13.27 L5.26 12.74 L6.51 9.71 L4.67 7.11 L7.11 4.67 L9.71 6.51 L12.74 5.26 L13.27 2.12 L16.73 2.12 L17.26 5.26 L20.29 6.51 L22.89 4.67 L25.33 7.11 L23.49 9.71 Z" stroke="#3b3a39" stroke-width="1.4" fill="none" stroke-linejoin="round"/>
<circle cx="15" cy="15" r="5" stroke="#1e5fb3" stroke-width="1.7"/>
</svg>
<div class="t" style="top:135.85px;font-size:19px;line-height:19px;color:#252423;left:1457px;">Setti</div>
<div class="a" style="left:1495px;top:66px;width:25px;height:136px;background:#f4f4f4;"></div>
<div class="a" style="left:1491px;top:66px;width:4px;height:136px;background:linear-gradient(to right, rgba(0,0,0,0), rgba(0,0,0,0.13));"></div>
<div class="a" style="left:1495px;top:62px;width:25px;height:4px;background:linear-gradient(rgba(0,0,0,0), rgba(0,0,0,0.10));"></div>
<div class="a" style="left:1495px;top:202px;width:25px;height:3px;background:linear-gradient(rgba(0,0,0,0.08), rgba(0,0,0,0));"></div>
<svg class="a" style="left:1501px;top:122px;" width="14" height="24" viewBox="0 0 14 24" fill="none"><path d="M2.5 2 L11.5 11.5 L2.5 21" stroke="#3b3a39" stroke-width="1.4" fill="none"/></svg>
<div class="a" style="left:776px;top:17px;width:68px;height:45px;background:#f3f3f3;box-sizing:border-box;border:1.5px solid #cfcfcf;"></div>
<svg class="a" style="left:785px;top:22px;" width="40" height="36" viewBox="0 0 40 36" fill="none">
<path d="M12.7 31.5 H4.4 V4 H32.2 V10.8" stroke="#444" stroke-width="1.7" fill="none"/>
<path d="M18 4 V17.7" stroke="#444" stroke-width="1.7" fill="none"/>
<path d="M17.5 31.8 L16.8 28.5 L28.5 16.8 Q30.5 14.8 32.4 16.6 Q34.2 18.5 32.2 20.5 L20.5 32.2 Z" stroke="#0a4aa8" stroke-width="2" fill="none" stroke-linejoin="round"/>
<path d="M26.3 19 L30 22.7" stroke="#0a4aa8" stroke-width="1.8"/>
</svg>
<svg class="a" style="left:819px;top:35px;" width="14" height="8.5" viewBox="0 0 14 8.5" fill="none"><path d="M1 1 L7.0 7.5 L13 1" stroke="#252423" stroke-width="1.8"/></svg>
<div class="a" style="left:1021px;top:14px;width:87px;height:48px;background:#ffffff;box-sizing:border-box;border:1px solid #d2d2d2;"></div>
<div class="a" style="left:1071px;top:14px;width:1px;height:48px;background:#d2d2d2;"></div>
<svg class="a" style="left:1029px;top:20px;" width="34" height="34" viewBox="0 0 34 34" fill="none">
<path d="M14 7.5 H29.5 V26.5 H12 L8 31.5 L8 26.5 H3.5 V20" stroke="#8a8a8a" stroke-width="1.5" fill="none"/>
<path d="M10.5 3 V15 M4.5 9 H16.5" stroke="#7a9fd6" stroke-width="1.6"/>
</svg>
<svg class="a" style="left:1086px;top:34px;" width="14" height="8.5" viewBox="0 0 14 8.5" fill="none"><path d="M1 1 L7.0 7.5 L13 1" stroke="#252423" stroke-width="1.8"/></svg>
<div class="a" style="left:1155px;top:12px;width:89px;height:50.5px;background:#ffffff;box-sizing:border-box;border:1px solid #d8d8d8;"></div>
<svg class="a" style="left:1165px;top:17px" width="41" height="41" viewBox="0 0 41 41">
<defs><clipPath id="av"><circle cx="20.3" cy="20.5" r="19.5"/></clipPath>
<filter id="avb" x="-10%" y="-10%" width="120%" height="120%"><feGaussianBlur stdDeviation="0.8"/></filter></defs>
<g clip-path="url(#av)"><g filter="url(#avb)">
<rect x="-2" y="-2" width="45" height="45" fill="#c9d7e6"/>
<rect x="-2" y="27" width="45" height="16" fill="#a7aaad"/>
<rect x="7" y="-2" width="3" height="45" fill="#e9eee8"/>
<rect x="12" y="-2" width="4" height="30" fill="#8fa0b5"/>
<ellipse cx="20.5" cy="14" rx="10" ry="10" fill="#4a3d3a"/>
<ellipse cx="28" cy="22" rx="4" ry="9" fill="#3d3535"/>
<ellipse cx="19.8" cy="20" rx="8" ry="10.5" fill="#b58468"/>
<ellipse cx="19.5" cy="11" rx="4" ry="2.5" fill="#c99f8a"/>
<circle cx="16.2" cy="17.5" r="1.3" fill="#4a3030"/>
<circle cx="23.5" cy="17.5" r="1.3" fill="#4a3030"/>
<path d="M15.5 24.5 Q19.5 27.5 23.5 24.5" stroke="#f3e6e0" stroke-width="2" fill="none"/>
<path d="M4 42 Q10 33 20 34 Q31 33 37 42 Z" fill="#8a6a50"/>
<path d="M22 42 Q28 34 38 36 L40 42 Z" fill="#3b3640"/>
<path d="M10 40 Q13 35 17 36 L16 42 Z" fill="#d9a050"/>
</g></g></svg>
<svg class="a" style="left:1221.5px;top:33px;" width="14" height="8.5" viewBox="0 0 14 8.5" fill="none"><path d="M1 1 L7.0 7.5 L13 1" stroke="#252423" stroke-width="1.8"/></svg>
<div class="a" style="left:54px;top:206px;width:841px;height:80px;background:#ffffff;"></div>
<div class="a" style="left:378px;top:206px;width:258px;height:80px;background:#deebf8;"></div>
<div class="a" style="left:54px;top:287px;width:841px;height:46px;background:#f5f5f5;"></div>
<div class="a" style="left:378px;top:287px;width:258px;height:46px;background:rgba(171,203,239,0.25);"></div>
<svg class="a" style="left:66px;top:304px;" width="14" height="14" viewBox="0 0 14 14" fill="none"><rect x="0.6" y="0.6" width="12.3" height="12.3" stroke="#252423" stroke-width="1.2"/><path d="M3.3 6.75 H10.2" stroke="#252423" stroke-width="1.2"/></svg>
<div class="t" style="top:301.05px;font-size:19.5px;line-height:19.5px;color:#252423;font-weight:700;left:90.0px;transform:scaleX(0.9390);transform-origin:0 0;">All</div>
<div class="t" style="top:301.90px;font-size:20px;line-height:20px;color:#252423;font-family:'Liberation Mono', monospace;font-weight:700;left:-631px;width:1000px;text-align:right;transform:scaleX(0.885);transform-origin:100% 0;">229.68</div>
<div class="a" style="left:54px;top:333px;width:841px;height:30.5px;background:#ffffff;"></div>
<div class="a" style="left:378px;top:333px;width:258px;height:30.5px;background:rgba(171,203,239,0.25);"></div>
<svg class="a" style="left:66px;top:342px;" width="14" height="14" viewBox="0 0 14 14" fill="none"><rect x="0.6" y="0.6" width="12.3" height="12.3" stroke="#252423" stroke-width="1.2"/><path d="M3.3 6.75 H10.2" stroke="#252423" stroke-width="1.2"/></svg>
<div class="t" style="top:339.30px;font-size:19.5px;line-height:19.5px;color:#252423;font-weight:700;left:90.0px;transform:scaleX(0.8277);transform-origin:0 0;">Asia</div>
<div class="t" style="top:340.15px;font-size:20px;line-height:20px;color:#252423;font-family:'Liberation Mono', monospace;font-weight:700;left:-631px;width:1000px;text-align:right;transform:scaleX(0.885);transform-origin:100% 0;">77.09</div>
<div class="a" style="left:54px;top:363.5px;width:841px;height:30.5px;background:#f5f5f5;"></div>
<div class="a" style="left:378px;top:363.5px;width:258px;height:30.5px;background:rgba(171,203,239,0.25);"></div>
<svg class="a" style="left:82px;top:373px;" width="14" height="14" viewBox="0 0 14 14" fill="none"><rect x="0.6" y="0.6" width="12.3" height="12.3" stroke="#252423" stroke-width="1.2"/><path d="M3.3 6.75 H10.2" stroke="#252423" stroke-width="1.2"/></svg>
<div class="t" style="top:369.80px;font-size:19.5px;line-height:19.5px;color:#252423;font-weight:700;left:106.0px;transform:scaleX(0.8894);transform-origin:0 0;">China</div>
<div class="t" style="top:370.65px;font-size:20px;line-height:20px;color:#252423;font-family:'Liberation Mono', monospace;font-weight:700;left:-631px;width:1000px;text-align:right;transform:scaleX(0.885);transform-origin:100% 0;">56.24</div>
<div class="a" style="left:54px;top:394px;width:841px;height:29px;background:#ffffff;"></div>
<div class="a" style="left:378px;top:394px;width:258px;height:29px;background:rgba(171,203,239,0.25);"></div>
<div class="a" style="left:54px;top:422px;width:841px;height:1px;background:rgba(0,0,0,0.085);"></div>
<div class="t" style="top:399.01px;font-size:19px;line-height:19px;color:#252423;left:122.5px;">Beijing</div>
<div class="t" style="top:399.90px;font-size:20px;line-height:20px;color:#252423;font-family:'Liberation Mono', monospace;left:-631px;width:1000px;text-align:right;transform:scaleX(0.885);transform-origin:100% 0;">28.27</div>
<div class="t" style="top:399.01px;font-size:19px;line-height:19px;color:#ff4a12;left:383px;">Beijing</div>
<div class="t" style="top:399.01px;font-size:19px;line-height:19px;color:#252423;left:641px;">Beijing</div>
<div class="a" style="left:54px;top:423px;width:841px;height:29px;background:#f5f5f5;"></div>
<div class="a" style="left:378px;top:423px;width:258px;height:29px;background:rgba(171,203,239,0.25);"></div>
<div class="a" style="left:54px;top:451px;width:841px;height:1px;background:rgba(0,0,0,0.085);"></div>
<div class="t" style="top:428.01px;font-size:19px;line-height:19px;color:#252423;left:122.5px;">Shanghai</div>
<div class="t" style="top:428.90px;font-size:20px;line-height:20px;color:#252423;font-family:'Liberation Mono', monospace;left:-631px;width:1000px;text-align:right;transform:scaleX(0.885);transform-origin:100% 0;">27.98</div>
<div class="t" style="top:428.01px;font-size:19px;line-height:19px;color:#ff4a12;left:383px;">Shanghai</div>
<div class="t" style="top:428.01px;font-size:19px;line-height:19px;color:#252423;left:641px;">Shanghai</div>
<div class="a" style="left:54px;top:452px;width:841px;height:31px;background:#ffffff;"></div>
<div class="a" style="left:378px;top:452px;width:258px;height:31px;background:rgba(171,203,239,0.25);"></div>
<svg class="a" style="left:82px;top:462px;" width="14" height="14" viewBox="0 0 14 14" fill="none"><rect x="0.6" y="0.6" width="12.3" height="12.3" stroke="#252423" stroke-width="1.2"/><path d="M3.3 6.75 H10.2" stroke="#252423" stroke-width="1.2"/></svg>
<div class="t" style="top:458.55px;font-size:19.5px;line-height:19.5px;color:#252423;font-weight:700;left:106.0px;transform:scaleX(0.9007);transform-origin:0 0;">India</div>
<div class="t" style="top:459.40px;font-size:20px;line-height:20px;color:#252423;font-family:'Liberation Mono', monospace;font-weight:700;left:-631px;width:1000px;text-align:right;transform:scaleX(0.885);transform-origin:100% 0;">20.85</div>
<div class="a" style="left:54px;top:483px;width:841px;height:29px;background:#f5f5f5;"></div>
<div class="a" style="left:378px;top:483px;width:258px;height:29px;background:rgba(171,203,239,0.25);"></div>
<div class="a" style="left:54px;top:511px;width:841px;height:1px;background:rgba(0,0,0,0.085);"></div>
<div class="t" style="top:488.01px;font-size:19px;line-height:19px;color:#252423;left:122.5px;">Bangalore</div>
<div class="t" style="top:488.90px;font-size:20px;line-height:20px;color:#252423;font-family:'Liberation Mono', monospace;left:-631px;width:1000px;text-align:right;transform:scaleX(0.885);transform-origin:100% 0;">6.88</div>
<div class="t" style="top:488.01px;font-size:19px;line-height:19px;color:#ff4a12;left:383px;">Bangalore</div>
<div class="t" style="top:488.01px;font-size:19px;line-height:19px;color:#252423;left:641px;">Bangalore</div>
<div class="a" style="left:54px;top:512px;width:841px;height:29px;background:#ffffff;"></div>
<div class="a" style="left:378px;top:512px;width:258px;height:29px;background:rgba(171,203,239,0.25);"></div>
<div class="a" style="left:54px;top:540px;width:841px;height:1px;background:rgba(0,0,0,0.085);"></div>
<div class="t" style="top:517.00px;font-size:19px;line-height:19px;color:#252423;left:122.5px;">Mumbai</div>
<div class="t" style="top:517.90px;font-size:20px;line-height:20px;color:#252423;font-family:'Liberation Mono', monospace;left:-631px;width:1000px;text-align:right;transform:scaleX(0.885);transform-origin:100% 0;">13.97</div>
<div class="t" style="top:517.00px;font-size:19px;line-height:19px;color:#ff4a12;left:383px;">Mumbai</div>
<div class="t" style="top:517.00px;font-size:19px;line-height:19px;color:#252423;left:641px;">Mumbai</div>
<div class="a" style="left:54px;top:541px;width:841px;height:31px;background:#f5f5f5;"></div>
<div class="a" style="left:378px;top:541px;width:258px;height:31px;background:rgba(171,203,239,0.25);"></div>
<svg class="a" style="left:66px;top:551px;" width="14" height="14" viewBox="0 0 14 14" fill="none"><rect x="0.6" y="0.6" width="12.3" height="12.3" stroke="#252423" stroke-width="1.2"/><path d="M3.3 6.75 H10.2" stroke="#252423" stroke-width="1.2"/></svg>
<div class="t" style="top:547.55px;font-size:19.5px;line-height:19.5px;color:#252423;font-weight:700;left:90.0px;transform:scaleX(0.8753);transform-origin:0 0;">Europe</div>
<div class="t" style="top:548.40px;font-size:20px;line-height:20px;color:#252423;font-family:'Liberation Mono', monospace;font-weight:700;left:-631px;width:1000px;text-align:right;transform:scaleX(0.885);transform-origin:100% 0;">69.66</div>
<div class="a" style="left:54px;top:572px;width:841px;height:31px;background:#ffffff;"></div>
<div class="a" style="left:378px;top:572px;width:258px;height:31px;background:rgba(171,203,239,0.25);"></div>
<svg class="a" style="left:82px;top:582px;" width="14" height="14" viewBox="0 0 14 14" fill="none"><rect x="0.6" y="0.6" width="12.3" height="12.3" stroke="#252423" stroke-width="1.2"/><path d="M3.3 6.75 H10.2" stroke="#252423" stroke-width="1.2"/></svg>
<div class="t" style="top:578.55px;font-size:19.5px;line-height:19.5px;color:#252423;font-weight:700;left:106.0px;transform:scaleX(0.8649);transform-origin:0 0;">France</div>
<div class="t" style="top:579.40px;font-size:20px;line-height:20px;color:#252423;font-family:'Liberation Mono', monospace;font-weight:700;left:-631px;width:1000px;text-align:right;transform:scaleX(0.885);transform-origin:100% 0;">35.70</div>
<div class="a" style="left:54px;top:603px;width:841px;height:29px;background:#f5f5f5;"></div>
<div class="a" style="left:378px;top:603px;width:258px;height:29px;background:rgba(171,203,239,0.25);"></div>
<div class="a" style="left:54px;top:631px;width:841px;height:1px;background:rgba(0,0,0,0.085);"></div>
<div class="t" style="top:608.00px;font-size:19px;line-height:19px;color:#252423;left:122.5px;">Paris</div>
<div class="t" style="top:608.90px;font-size:20px;line-height:20px;color:#252423;font-family:'Liberation Mono', monospace;left:-631px;width:1000px;text-align:right;transform:scaleX(0.885);transform-origin:100% 0;">35.70</div>
<div class="t" style="top:608.00px;font-size:19px;line-height:19px;color:#ff4a12;left:383px;">Paris</div>
<div class="t" style="top:608.00px;font-size:19px;line-height:19px;color:#252423;left:641px;">Paris</div>
<div class="a" style="left:54px;top:632px;width:841px;height:31px;background:#ffffff;"></div>
<div class="a" style="left:378px;top:632px;width:258px;height:31px;background:rgba(171,203,239,0.25);"></div>
<svg class="a" style="left:82px;top:642px;" width="14" height="14" viewBox="0 0 14 14" fill="none"><rect x="0.6" y="0.6" width="12.3" height="12.3" stroke="#252423" stroke-width="1.2"/><path d="M3.3 6.75 H10.2" stroke="#252423" stroke-width="1.2"/></svg>
<div class="t" style="top:638.55px;font-size:19.5px;line-height:19.5px;color:#252423;font-weight:700;left:106.0px;transform:scaleX(0.9121);transform-origin:0 0;">Germany</div>
<div class="t" style="top:639.40px;font-size:20px;line-height:20px;color:#252423;font-family:'Liberation Mono', monospace;font-weight:700;left:-631px;width:1000px;text-align:right;transform:scaleX(0.885);transform-origin:100% 0;">33.95</div>
<div class="a" style="left:54px;top:663px;width:841px;height:29px;background:#f5f5f5;"></div>
<div class="a" style="left:378px;top:663px;width:258px;height:29px;background:rgba(171,203,239,0.25);"></div>
<div class="a" style="left:54px;top:691px;width:841px;height:1px;background:rgba(0,0,0,0.085);"></div>
<div class="t" style="top:668.00px;font-size:19px;line-height:19px;color:#252423;left:122.5px;">Berlin</div>
<div class="t" style="top:668.90px;font-size:20px;line-height:20px;color:#252423;font-family:'Liberation Mono', monospace;left:-631px;width:1000px;text-align:right;transform:scaleX(0.885);transform-origin:100% 0;">33.95</div>
<div class="t" style="top:668.00px;font-size:19px;line-height:19px;color:#ff4a12;left:383px;">Berlin</div>
<div class="t" style="top:668.00px;font-size:19px;line-height:19px;color:#252423;left:641px;">Berlin</div>
<div class="a" style="left:54px;top:692px;width:841px;height:31px;background:#ffffff;"></div>
<div class="a" style="left:378px;top:692px;width:258px;height:31px;background:rgba(171,203,239,0.25);"></div>
<svg class="a" style="left:66px;top:702px;" width="14" height="14" viewBox="0 0 14 14" fill="none"><rect x="0.6" y="0.6" width="12.3" height="12.3" stroke="#252423" stroke-width="1.2"/><path d="M3.3 6.75 H10.2" stroke="#252423" stroke-width="1.2"/></svg>
<div class="t" style="top:698.55px;font-size:19.5px;line-height:19.5px;color:#252423;font-weight:700;left:90.0px;transform:scaleX(0.9255);transform-origin:0 0;">North America</div>
<div class="t" style="top:699.40px;font-size:20px;line-height:20px;color:#252423;font-family:'Liberation Mono', monospace;font-weight:700;left:-631px;width:1000px;text-align:right;transform:scaleX(0.885);transform-origin:100% 0;">82.93</div>
<div class="a" style="left:54px;top:723px;width:841px;height:31px;background:#f5f5f5;"></div>
<div class="a" style="left:378px;top:723px;width:258px;height:31px;background:rgba(171,203,239,0.25);"></div>
<svg class="a" style="left:82px;top:733px;" width="14" height="14" viewBox="0 0 14 14" fill="none"><rect x="0.6" y="0.6" width="12.3" height="12.3" stroke="#252423" stroke-width="1.2"/><path d="M3.3 6.75 H10.2" stroke="#252423" stroke-width="1.2"/></svg>
<div class="t" style="top:729.55px;font-size:19.5px;line-height:19.5px;color:#252423;font-weight:700;left:106.0px;transform:scaleX(0.8913);transform-origin:0 0;">Canada</div>
<div class="t" style="top:730.40px;font-size:20px;line-height:20px;color:#252423;font-family:'Liberation Mono', monospace;font-weight:700;left:-631px;width:1000px;text-align:right;transform:scaleX(0.885);transform-origin:100% 0;">13.71</div>
<div class="a" style="left:54px;top:754px;width:841px;height:29px;background:#ffffff;"></div>
<div class="a" style="left:378px;top:754px;width:258px;height:29px;background:rgba(171,203,239,0.25);"></div>
<div class="a" style="left:54px;top:782px;width:841px;height:1px;background:rgba(0,0,0,0.085);"></div>
<div class="t" style="top:759.00px;font-size:19px;line-height:19px;color:#252423;left:122.5px;">Toronto</div>
<div class="t" style="top:759.90px;font-size:20px;line-height:20px;color:#252423;font-family:'Liberation Mono', monospace;left:-631px;width:1000px;text-align:right;transform:scaleX(0.885);transform-origin:100% 0;">6.62</div>
<div class="t" style="top:759.00px;font-size:19px;line-height:19px;color:#ff4a12;left:383px;">Toronto</div>
<div class="t" style="top:759.00px;font-size:19px;line-height:19px;color:#252423;left:641px;">Toronto</div>
<div class="a" style="left:54px;top:783px;width:841px;height:29px;background:#f5f5f5;"></div>
<div class="a" style="left:378px;top:783px;width:258px;height:29px;background:rgba(171,203,239,0.25);"></div>
<div class="a" style="left:54px;top:811px;width:841px;height:1px;background:rgba(0,0,0,0.085);"></div>
<div class="t" style="top:788.00px;font-size:19px;line-height:19px;color:#252423;left:122.5px;">Vancouver</div>
<div class="t" style="top:788.90px;font-size:20px;line-height:20px;color:#252423;font-family:'Liberation Mono', monospace;left:-631px;width:1000px;text-align:right;transform:scaleX(0.885);transform-origin:100% 0;">7.08</div>
<div class="t" style="top:788.00px;font-size:19px;line-height:19px;color:#ff4a12;left:383px;">Vancouver</div>
<div class="t" style="top:788.00px;font-size:19px;line-height:19px;color:#252423;left:641px;">Vancouver</div>
<div class="a" style="left:54px;top:812px;width:841px;height:31px;background:#ffffff;"></div>
<div class="a" style="left:378px;top:812px;width:258px;height:31px;background:rgba(171,203,239,0.25);"></div>
<svg class="a" style="left:82px;top:822px;" width="14" height="14" viewBox="0 0 14 14" fill="none"><rect x="0.6" y="0.6" width="12.3" height="12.3" stroke="#252423" stroke-width="1.2"/><path d="M3.3 6.75 H10.2" stroke="#252423" stroke-width="1.2"/></svg>
<div class="t" style="top:818.55px;font-size:19.5px;line-height:19.5px;color:#252423;font-weight:700;left:106.0px;transform:scaleX(0.8972);transform-origin:0 0;">United States</div>
<div class="t" style="top:819.40px;font-size:20px;line-height:20px;color:#252423;font-family:'Liberation Mono', monospace;font-weight:700;left:-631px;width:1000px;text-align:right;transform:scaleX(0.885);transform-origin:100% 0;">69.23</div>
<div class="a" style="left:54px;top:843px;width:841px;height:29px;background:#f5f5f5;"></div>
<div class="a" style="left:378px;top:843px;width:258px;height:29px;background:rgba(171,203,239,0.25);"></div>
<div class="a" style="left:54px;top:871px;width:841px;height:1px;background:rgba(0,0,0,0.085);"></div>
<div class="t" style="top:848.00px;font-size:19px;line-height:19px;color:#252423;left:122.5px;">Chicago</div>
<div class="t" style="top:848.90px;font-size:20px;line-height:20px;color:#252423;font-family:'Liberation Mono', monospace;left:-631px;width:1000px;text-align:right;transform:scaleX(0.885);transform-origin:100% 0;">20.88</div>
<div class="t" style="top:848.00px;font-size:19px;line-height:19px;color:#ff4a12;left:383px;">Chicago</div>
<div class="t" style="top:848.00px;font-size:19px;line-height:19px;color:#252423;left:641px;">Chicago</div>
<div class="a" style="left:54px;top:872px;width:841px;height:29px;background:#ffffff;"></div>
<div class="a" style="left:378px;top:872px;width:258px;height:29px;background:rgba(171,203,239,0.25);"></div>
<div class="a" style="left:54px;top:900px;width:841px;height:1px;background:rgba(0,0,0,0.085);"></div>
<div class="t" style="top:877.00px;font-size:19px;line-height:19px;color:#252423;left:122.5px;">Los Angeles</div>
<div class="t" style="top:877.90px;font-size:20px;line-height:20px;color:#252423;font-family:'Liberation Mono', monospace;left:-631px;width:1000px;text-align:right;transform:scaleX(0.885);transform-origin:100% 0;">20.44</div>
<div class="t" style="top:877.00px;font-size:19px;line-height:19px;color:#ff4a12;left:383px;">Los Angeles</div>
<div class="t" style="top:877.00px;font-size:19px;line-height:19px;color:#252423;left:641px;">Los Angeles</div>
<div class="a" style="left:54px;top:901px;width:841px;height:29px;background:#f5f5f5;"></div>
<div class="a" style="left:378px;top:901px;width:258px;height:29px;background:rgba(171,203,239,0.25);"></div>
<div class="a" style="left:54px;top:929px;width:841px;height:1px;background:rgba(0,0,0,0.085);"></div>
<div class="t" style="top:906.00px;font-size:19px;line-height:19px;color:#252423;left:122.5px;transform:scaleX(0.9168);transform-origin:0 0;">New York Ci…</div>
<div class="t" style="top:906.90px;font-size:20px;line-height:20px;color:#252423;font-family:'Liberation Mono', monospace;left:-631px;width:1000px;text-align:right;transform:scaleX(0.885);transform-origin:100% 0;">27.90</div>
<div class="t" style="top:906.00px;font-size:19px;line-height:19px;color:#ff4a12;left:383px;">New York City</div>
<div class="t" style="top:906.00px;font-size:19px;line-height:19px;color:#252423;left:641px;">New York City</div>
<div class="a" style="left:54px;top:930px;width:841px;height:46px;background:#ffffff;"></div>
<div class="a" style="left:378px;top:930px;width:258px;height:46px;background:rgba(171,203,239,0.25);"></div>
<svg class="a" style="left:66px;top:947px;" width="14" height="14" viewBox="0 0 14 14" fill="none"><rect x="0.6" y="0.6" width="12.3" height="12.3" stroke="#252423" stroke-width="1.2"/><path d="M3.3 6.75 H10.2" stroke="#252423" stroke-width="1.2"/></svg>
<div class="t" style="top:944.05px;font-size:19.5px;line-height:19.5px;color:#252423;font-weight:700;left:90.0px;transform:scaleX(0.8917);transform-origin:0 0;">Pivot by region</div>
<div class="t" style="top:944.90px;font-size:20px;line-height:20px;color:#252423;font-family:'Liberation Mono', monospace;font-weight:700;left:-631px;width:1000px;text-align:right;transform:scaleX(0.885);transform-origin:100% 0;">229.68</div>
<div class="a" style="left:54px;top:976px;width:841px;height:31px;background:#f5f5f5;"></div>
<div class="a" style="left:378px;top:976px;width:258px;height:31px;background:rgba(171,203,239,0.25);"></div>
<svg class="a" style="left:66px;top:986px;" width="14" height="14" viewBox="0 0 14 14" fill="none"><rect x="0.6" y="0.6" width="12.3" height="12.3" stroke="#252423" stroke-width="1.2"/><path d="M3.3 6.75 H10.2" stroke="#252423" stroke-width="1.2"/></svg>
<div class="t" style="top:982.55px;font-size:19.5px;line-height:19.5px;color:#252423;font-weight:700;left:90.0px;transform:scaleX(0.8277);transform-origin:0 0;">Asia</div>
<div class="t" style="top:983.40px;font-size:20px;line-height:20px;color:#252423;font-family:'Liberation Mono', monospace;font-weight:700;left:-631px;width:1000px;text-align:right;transform:scaleX(0.885);transform-origin:100% 0;">77.09</div>
<div class="a" style="left:54px;top:1007px;width:841px;height:31px;background:#ffffff;"></div>
<div class="a" style="left:378px;top:1007px;width:258px;height:31px;background:rgba(171,203,239,0.25);"></div>
<svg class="a" style="left:82px;top:1017px;" width="14" height="14" viewBox="0 0 14 14" fill="none"><rect x="0.6" y="0.6" width="12.3" height="12.3" stroke="#252423" stroke-width="1.2"/><path d="M3.3 6.75 H10.2" stroke="#252423" stroke-width="1.2"/></svg>
<div class="t" style="top:1013.55px;font-size:19.5px;line-height:19.5px;color:#252423;font-weight:700;left:106.0px;transform:scaleX(0.8894);transform-origin:0 0;">China</div>
<div class="t" style="top:1014.40px;font-size:20px;line-height:20px;color:#252423;font-family:'Liberation Mono', monospace;font-weight:700;left:-631px;width:1000px;text-align:right;transform:scaleX(0.885);transform-origin:100% 0;">56.24</div>
<div class="a" style="left:54px;top:1038px;width:841px;height:26px;background:#f5f5f5;"></div>
<div class="a" style="left:378px;top:1038px;width:258px;height:26px;background:rgba(171,203,239,0.25);"></div>
<div class="t" style="top:1042.00px;font-size:19px;line-height:19px;color:#252423;left:122.5px;">Beijing</div>
<div class="t" style="top:1042.90px;font-size:20px;line-height:20px;color:#252423;font-family:'Liberation Mono', monospace;left:-631px;width:1000px;text-align:right;transform:scaleX(0.885);transform-origin:100% 0;">28.27</div>
<div class="t" style="top:1042.00px;font-size:19px;line-height:19px;color:#ff4a12;left:383px;">Beijing</div>
<div class="t" style="top:1042.00px;font-size:19px;line-height:19px;color:#252423;left:641px;">Beijing</div>
<div class="a" style="left:54px;top:205px;width:841px;height:1px;background:#e2e2e2;"></div>
<div class="a" style="left:53px;top:205px;width:1px;height:860px;background:#e2e2e2;"></div>
<div class="a" style="left:894px;top:205px;width:1.5px;height:860px;background:#e2e2e2;"></div>
<div class="a" style="left:54px;top:286px;width:841px;height:1.5px;background:#a0a0a0;"></div>
<div class="a" style="left:53px;top:1064px;width:842px;height:1.5px;background:#b4b4b4;"></div>
<div class="a" style="left:247px;top:206px;width:1px;height:858px;background:#a4a4a4;"></div>
<div class="t" style="top:237.43px;font-size:19.5px;line-height:19.5px;color:#252423;left:85.5px;transform:scaleX(0.9666);transform-origin:0 0;">Region_Name</div>
<div class="t" style="top:227.43px;font-size:19.5px;line-height:19.5px;color:#252423;left:265.0px;transform:scaleX(0.9141);transform-origin:0 0;">Sum of Sales</div>
<div class="t" style="top:251.90px;font-size:16px;line-height:16px;color:#252423;left:299.0px;transform:scaleX(1.0251);transform-origin:0 0;">in Millions</div>
<svg class="a" style="left:381px;top:238px;" width="16" height="15" viewBox="0 0 16 15" fill="none"><path d="M1 1.5 H15 M1 5.5 H15 M1 9.5 H15 M1 13.5 H15" stroke="#2b2b2b" stroke-width="1.3"/></svg>
<div class="t" style="top:237.73px;font-size:19.5px;line-height:19.5px;color:#252423;left:398.7px;transform:scaleX(0.9679);transform-origin:0 0;">City Name</div>
<svg class="a" style="left:640px;top:239px;" width="18" height="14" viewBox="0 0 18 14" fill="none"><path d="M1 2.4 H9 M1 7.3 H16 M1 11.7 H16" stroke="#555" stroke-width="1.6"/></svg>
<div class="t" style="top:237.73px;font-size:19.5px;line-height:19.5px;color:#252423;left:658.3px;transform:scaleX(0.9621);transform-origin:0 0;">Cities with Product Sales</div>
<div class="a" style="left:377px;top:205px;width:2px;height:861px;background:#0f78d4;"></div>
<div class="a" style="left:634.8px;top:205px;width:1.6px;height:861px;background:#0f78d4;"></div>
<div class="a" style="left:377px;top:205px;width:260px;height:2px;background:#0f78d4;"></div>
<div class="a" style="left:377px;top:1064px;width:260px;height:2px;background:#0f78d4;"></div>
<div class="a" style="left:377px;top:285.5px;width:260px;height:2px;background:#0f78d4;"></div>
<div class="a" style="left:1520px;top:3px;width:557px;height:1160px;background:#ffffff;"></div>
<div class="a" style="left:1520px;top:100px;width:551px;height:956px;background:#f4f4f4;"></div>
<div class="a" style="left:25px;top:3px;width:2052px;height:7px;background:linear-gradient(rgba(0,0,0,0.065),rgba(0,0,0,0));"></div>
<svg class="a" style="left:1923px;top:12px;" width="36" height="32" viewBox="0 0 36 32" fill="none"><path d="M3 3.5 H33 L20 17 V29 H15 V17 Z" stroke="#707070" stroke-width="1.6" fill="none"/></svg>
<svg class="a" style="left:1981px;top:15px;" width="32" height="28" viewBox="0 0 32 28" fill="none"><path d="M15.8 2.5 H3 V25 H30.5 V15" stroke="#707070" stroke-width="1.6" fill="none"/>
<path d="M3 16.5 H14 V25" stroke="#707070" stroke-width="1.6" fill="none"/>
<path d="M19 2.5 H30 V13 M30 2.5 L18.5 13.5" stroke="#707070" stroke-width="1.6" fill="none"/></svg>
<svg class="a" style="left:2037px;top:23px;" width="8" height="8" viewBox="0 0 8 8" fill="none"><circle cx="4" cy="4" r="3" fill="#707070"/></svg>
<svg class="a" style="left:2049px;top:23px;" width="8" height="8" viewBox="0 0 8 8" fill="none"><circle cx="4" cy="4" r="3" fill="#707070"/></svg>
<svg class="a" style="left:2061px;top:23px;" width="8" height="8" viewBox="0 0 8 8" fill="none"><circle cx="4" cy="4" r="3" fill="#707070"/></svg>
<svg class="a" style="left:1547px;top:53px;" width="18" height="24" viewBox="0 0 18 24" fill="none"><path d="M13 2.5 L3.5 12 L13 21.5" stroke="#505050" stroke-width="1.5" fill="none"/></svg>
<div class="t" style="top:44.50px;font-size:34px;line-height:34px;color:#252423;left:1602.5px;transform:scaleX(0.9486);transform-origin:0 0;">Conditional Formatting</div>
<svg class="a" style="left:2033px;top:61px;" width="24" height="24" viewBox="0 0 24 24" fill="none"><path d="M2 2 L21 21 M21 2 L2 21" stroke="#333" stroke-width="1.6"/></svg>
<div class="t" style="top:133.72px;font-size:21.5px;line-height:21.5px;color:#252423;left:1546.3px;transform:scaleX(1.0322);transform-origin:0 0;-webkit-text-stroke:0.45px #252423;">Title</div>
<div class="a" style="left:1762px;top:123px;width:283px;height:50px;background:#ffffff;box-sizing:border-box;border:1.3px solid #dedede;"></div>
<div class="t" style="top:140.17px;font-size:19.8px;line-height:19.8px;color:#333333;left:1783.0px;transform:scaleX(0.9274);transform-origin:0 0;">Data Bars – Text</div>
<div class="t" style="top:202.32px;font-size:21.5px;line-height:21.5px;color:#252423;left:1547.0px;transform:scaleX(0.9913);transform-origin:0 0;-webkit-text-stroke:0.45px #252423;">Apply to</div>
<div class="a" style="left:1762px;top:187px;width:283px;height:52px;background:#ffffff;box-sizing:border-box;border:1.3px solid #dedede;"></div>
<div class="t" style="top:204.07px;font-size:19.8px;line-height:19.8px;color:#333333;left:1780.3px;transform:scaleX(0.9435);transform-origin:0 0;">City Name</div>
<svg class="a" style="left:2002.5px;top:207px;" width="21" height="13" viewBox="0 0 21 13" fill="none"><path d="M1.5 1.5 L10.5 10.5 L19.5 1.5" stroke="#333" stroke-width="1.4" fill="none"/></svg>
<div class="t" style="top:267.83px;font-size:21.5px;line-height:21.5px;color:#252423;left:1547.6px;transform:scaleX(0.9377);transform-origin:0 0;-webkit-text-stroke:0.45px #252423;">Row hierarchy levels</div>
<div class="a" style="left:1762px;top:252.5px;width:283px;height:49.5px;background:#ffffff;box-sizing:border-box;border:1.3px solid #dedede;"></div>
<div class="t" style="top:269.77px;font-size:19.8px;line-height:19.8px;color:#333333;left:1780.0px;transform:scaleX(0.9376);transform-origin:0 0;">Values only</div>
<svg class="a" style="left:2002.5px;top:271px;" width="21" height="13" viewBox="0 0 21 13" fill="none"><path d="M1.5 1.5 L10.5 10.5 L19.5 1.5" stroke="#333" stroke-width="1.4" fill="none"/></svg>
<div class="t" style="top:333.12px;font-size:21.5px;line-height:21.5px;color:#252423;left:1547.0px;transform:scaleX(0.9610);transform-origin:0 0;-webkit-text-stroke:0.45px #252423;">Format by</div>
<div class="a" style="left:1762px;top:317.5px;width:283px;height:50.0px;background:#ffffff;box-sizing:border-box;border:1.3px solid #dedede;"></div>
<div class="t" style="top:335.07px;font-size:19.8px;line-height:19.8px;color:#333333;left:1780.0px;transform:scaleX(0.9478);transform-origin:0 0;">Rules (If Conditions)</div>
<svg class="a" style="left:2002.5px;top:336px;" width="21" height="13" viewBox="0 0 21 13" fill="none"><path d="M1.5 1.5 L10.5 10.5 L19.5 1.5" stroke="#333" stroke-width="1.4" fill="none"/></svg>
<div class="a" style="left:1754px;top:304.5px;width:301px;height:83px;box-sizing:border-box;border:2.2px solid #f01219;border-radius:7px;box-shadow:inset 0 0 8px rgba(0,0,0,0.22), 0 1px 4px rgba(0,0,0,0.12);"></div>
<div class="a" style="left:1546px;top:397px;width:26.2px;height:27px;background:#0a72d2;"></div>
<svg class="a" style="left:1546px;top:397px;" width="27" height="27" viewBox="0 0 27 27" fill="none"><path d="M5.8 11.8 L11.8 18 L21.3 8.8" stroke="#fff" stroke-width="3.3" fill="none"/></svg>
<div class="t" style="top:400.80px;font-size:20px;line-height:20px;color:#333333;left:1585.6px;transform:scaleX(0.9445);transform-origin:0 0;">Show/Hide values</div>
<div class="t" style="top:461.80px;font-size:30px;line-height:30px;color:#333;font-weight:700;left:1550.5px;font-family:'Liberation Sans';">B</div>
<svg class="a" style="left:1593px;top:463px;" width="20" height="26" viewBox="0 0 20 26" fill="none"><path d="M10 2.5 H19 M2 23.5 H11 M14.5 2.5 L6.5 23.5" stroke="#333" stroke-width="1.6" fill="none"/></svg>
<svg class="a" style="left:1634px;top:463px;" width="24" height="26" viewBox="0 0 24 26" fill="none"><path d="M3.3 2 V15 Q3.3 23.3 11.8 23.3 Q20.3 23.3 20.3 15 V2" stroke="#333" stroke-width="2" fill="none"/></svg>
<div class="a" style="left:1630px;top:491px;width:31px;height:4px;background:#111;"></div>
<svg class="a" style="left:1662px;top:472.5px;" width="17.5" height="10" viewBox="0 0 17.5 10" fill="none"><path d="M1 1 L8.75 9 L16.5 1" stroke="#555" stroke-width="1.2"/></svg>
<div class="a" style="left:1692px;top:451px;width:1.5px;height:50px;background:#d4d4d4;"></div>
<svg class="a" style="left:1710px;top:460px;" width="30" height="30" viewBox="0 0 30 30" fill="none"><path d="M3 14.5 L13 5 L22.5 14.5 L13 24 Z" stroke="#333" stroke-width="1.6" fill="none" stroke-linejoin="round"/>
<path d="M3 14.5 H22.5" stroke="#333" stroke-width="1.6"/>
<path d="M10.5 7.5 V3.5 Q10.5 1.5 12.5 1.5 Q14.5 1.5 14.5 3.5 V11" stroke="#333" stroke-width="1.5" fill="none"/>
<path d="M24 19.5 Q27.5 23.5 27.5 25.5 Q27.5 28 24.5 28 Q21.5 28 21.5 25.5 Q21.5 23.5 24 19.5 Z" stroke="#333" stroke-width="1.5" fill="none"/></svg>
<svg class="a" style="left:1759px;top:462px;" width="24" height="28" viewBox="0 0 24 28" fill="none"><path d="M2.5 25.5 L11.5 3 L20.5 25.5 M6 17.5 H17" stroke="#333" stroke-width="1.5" fill="none"/></svg>
<div class="a" style="left:1755px;top:491px;width:31px;height:4px;background:#ff4a12;"></div>
<svg class="a" style="left:1807px;top:461px;" width="28" height="29" viewBox="0 0 28 29" fill="none"><rect x="1.5" y="1.5" width="25" height="26" stroke="#333" stroke-width="1.5" stroke-dasharray="2.2 2.2" fill="none"/><path d="M14 1.5 V27.5 M1.5 14.5 H26.5" stroke="#333" stroke-width="1.4" stroke-dasharray="2.2 2.2"/></svg>
<svg class="a" style="left:1843.5px;top:472.5px;" width="17.5" height="10" viewBox="0 0 17.5 10" fill="none"><path d="M1 1 L8.75 9 L16.5 1" stroke="#555" stroke-width="1.2"/></svg>
<svg class="a" style="left:1872px;top:465px;" width="23" height="23" viewBox="0 0 23 23" fill="none"><defs><clipPath id="hc"><rect x="1" y="1" width="20.5" height="20"/></clipPath></defs>
<rect x="1" y="1" width="20.5" height="20" stroke="#333" stroke-width="1.4" fill="none"/>
<g clip-path="url(#hc)" stroke="#444" stroke-width="1.2">
<path d="M-5 7 L7 -5 M-5 13 L13 -5 M-5 19 L19 -5 M-5 25 L25 -5 M1 25 L25 1 M7 25 L25 7 M13 25 L25 13"/></g></svg>
<div class="a" style="left:1867.5px;top:491px;width:31px;height:3px;background:#d8d8d8;"></div>
<svg class="a" style="left:1903.5px;top:472.5px;" width="17.5" height="10" viewBox="0 0 17.5 10" fill="none"><path d="M1 1 L8.75 9 L16.5 1" stroke="#555" stroke-width="1.2"/></svg>
<div class="a" style="left:1928.5px;top:451px;width:1.5px;height:50px;background:#d4d4d4;"></div>
<svg class="a" style="left:1943px;top:463px;" width="27" height="27" viewBox="0 0 27 27" fill="none"><rect x="2.5" y="2.5" width="21.5" height="21.5" stroke="#333" stroke-width="1.7" fill="none"/>
<path d="M2.5 2.5 L24 24 M16 24 L18 19.5 Q20 17.5 21.5 19.5 L24 22" stroke="#333" stroke-width="1.4" fill="none"/></svg>
<div class="a" style="left:1982px;top:451px;width:1.5px;height:50px;background:#d4d4d4;"></div>
<div class="t" style="top:530.93px;font-size:21.5px;line-height:21.5px;color:#252423;left:1547.0px;transform:scaleX(0.9588);transform-origin:0 0;-webkit-text-stroke:0.45px #252423;">Conditions</div>
<div class="t" style="top:582.36px;font-size:26.4px;line-height:26.4px;color:#333;left:1547.8px;transform:scaleX(0.8961);transform-origin:0 0;">If</div>
<div class="a" style="left:1583px;top:570px;width:216px;height:51.5px;background:#ffffff;box-sizing:border-box;border:1.3px solid #dedede;"></div>
<div class="t" style="top:587.37px;font-size:19.8px;line-height:19.8px;color:#333333;left:1601.0px;transform:scaleX(0.9521);transform-origin:0 0;">City Name</div>
<svg class="a" style="left:1756.5px;top:589px;" width="21" height="13" viewBox="0 0 21 13" fill="none"><path d="M1.5 1.5 L10.5 10.5 L19.5 1.5" stroke="#333" stroke-width="1.4" fill="none"/></svg>
<div class="a" style="left:1807.5px;top:570px;width:215.0px;height:51.5px;background:#ffffff;box-sizing:border-box;border:1.3px solid #dedede;"></div>
<div class="t" style="top:587.37px;font-size:19.8px;line-height:19.8px;color:#333333;left:1824.0px;transform:scaleX(0.9560);transform-origin:0 0;">is equal to</div>
<svg class="a" style="left:1980.0px;top:589px;" width="21" height="13" viewBox="0 0 21 13" fill="none"><path d="M1.5 1.5 L10.5 10.5 L19.5 1.5" stroke="#333" stroke-width="1.4" fill="none"/></svg>
<div class="a" style="left:1808px;top:561px;width:222.5px;height:73px;box-sizing:border-box;border:2.2px solid #f01219;border-radius:7px;box-shadow:inset 0 0 8px rgba(0,0,0,0.22), 0 1px 4px rgba(0,0,0,0.12);"></div>
<div class="a" style="left:1583px;top:629px;width:216px;height:50.5px;background:#ffffff;box-sizing:border-box;border:1.3px solid #dedede;"></div>
<div class="t" style="top:645.17px;font-size:19.8px;line-height:19.8px;color:#333333;left:1601.8px;transform:scaleX(0.9340);transform-origin:0 0;">Cities with Pro...</div>
<svg class="a" style="left:1756.5px;top:648px;" width="21" height="13" viewBox="0 0 21 13" fill="none"><path d="M1.5 1.5 L10.5 10.5 L19.5 1.5" stroke="#333" stroke-width="1.4" fill="none"/></svg>
<div class="t" style="top:711.23px;font-size:23.5px;line-height:23.5px;color:#1473d4;left:1874.0px;transform:scaleX(0.9544);transform-origin:0 0;">+ Add Condition</div>
<div class="a" style="left:1773px;top:1079px;width:129px;height:58px;background:#f3f3f3;"></div>
<div class="t" style="top:1097.30px;font-size:22px;line-height:22px;color:#252423;left:1816.8px;transform:scaleX(0.8621);transform-origin:0 0;-webkit-text-stroke:0.3px #252423;">Back</div>
<div class="a" style="left:1918.5px;top:1079px;width:129.5px;height:58px;background:#f6f6f6;"></div>
<div class="t" style="top:1097.30px;font-size:22px;line-height:22px;color:#bdbdbd;left:1957.0px;transform:scaleX(0.9633);transform-origin:0 0;-webkit-text-stroke:0.3px #bdbdbd;">Apply</div>
<div class="a" style="left:1514px;top:9px;width:6px;height:1151px;background:linear-gradient(to right, rgba(0,0,0,0), rgba(0,0,0,0.09));"></div>
<div class="a" style="left:31px;top:1115.5px;width:1489px;height:1.5px;background:#d6d6d6;"></div>
<div class="t" style="top:1129.22px;font-size:19.5px;line-height:19.5px;color:#252423;left:31.5px;transform:scaleX(0.9289);transform-origin:0 0;">Rows: 76</div>
<svg class="a" style="left:851px;top:1125px;" width="30" height="30" viewBox="0 0 30 30" fill="none"><path d="M24.35 12.33 L27.39 12.84 L27.39 16.16 L24.35 16.67 L23.15 19.58 L24.94 22.08 L22.58 24.44 L20.08 22.65 L17.17 23.85 L16.66 26.89 L13.34 26.89 L12.83 23.85 L9.92 22.65 L7.42 24.44 L5.06 22.08 L6.85 19.58 L5.65 16.67 L2.61 16.16 L2.61 12.84 L5.65 12.33 L6.85 9.42 L5.06 6.92 L7.42 4.56 L9.92 6.35 L12.83 5.15 L13.34 2.11 L16.66 2.11 L17.17 5.15 L20.08 6.35 L22.58 4.56 L24.94 6.92 L23.15 9.42 Z" stroke="#444" stroke-width="1.4" fill="none" stroke-linejoin="round"/>
<circle cx="15" cy="14.5" r="4.6" stroke="#1e5fb3" stroke-width="1.6"/></svg>
<div class="a" style="left:897px;top:1139.5px;width:16px;height:2px;background:#252423;"></div>
<div class="a" style="left:926px;top:1125px;width:89px;height:32.5px;background:#fff;box-sizing:border-box;border:1.5px solid #a8a8a8;"></div>
<div class="t" style="top:1133.22px;font-size:19.5px;line-height:19.5px;color:#252423;left:947.5px;transform:scaleX(0.8719);transform-origin:0 0;">100 %</div>
<svg class="a" style="left:1023px;top:1131px;" width="20" height="20" viewBox="0 0 20 20" fill="none"><path d="M10 1.5 V18.5 M1.5 10 H18.5" stroke="#1b1b1b" stroke-width="1.8"/></svg>
<svg class="a" style="left:1070px;top:1128px;" width="20" height="20" viewBox="0 0 20 20" fill="none"><path d="M3.5 2 V17" stroke="#9a9a9a" stroke-width="2.5"/><path d="M16 2.5 L8.5 9.5 L16 16.5" stroke="#9a9a9a" stroke-width="2.3" fill="none"/></svg>
<svg class="a" style="left:1096px;top:1128px;" width="16" height="20" viewBox="0 0 16 20" fill="none"><path d="M12.5 2.5 L5 9.5 L12.5 16.5" stroke="#9a9a9a" stroke-width="2.3" fill="none"/></svg>
<div class="t" style="top:1129.02px;font-size:19.5px;line-height:19.5px;color:#252423;left:1119.7px;transform:scaleX(0.8412);transform-origin:0 0;">Page</div>
<div class="a" style="left:1166px;top:1121px;width:39.5px;height:32.5px;background:#fff;box-sizing:border-box;border:1.3px solid #d8d8d8;"></div>
<div class="t" style="top:1129.02px;font-size:19.5px;line-height:19.5px;color:#252423;left:1181.0px;transform:scaleX(0.8209);transform-origin:0 0;">1</div>
<div class="t" style="top:1129.02px;font-size:19.5px;line-height:19.5px;color:#252423;left:1212.9px;transform:scaleX(0.9439);transform-origin:0 0;">of 3</div>
<svg class="a" style="left:1252px;top:1128px;" width="16" height="20" viewBox="0 0 16 20" fill="none"><path d="M3.5 2.5 L11 9.5 L3.5 16.5" stroke="#1b1b1b" stroke-width="2.5" fill="none"/></svg>
<svg class="a" style="left:1272px;top:1128px;" width="22" height="20" viewBox="0 0 22 20" fill="none"><path d="M3 2.5 L10.5 9.5 L3 16.5" stroke="#1b1b1b" stroke-width="2.5" fill="none"/><path d="M17 2 V17" stroke="#1b1b1b" stroke-width="2.8"/></svg>
<div class="t" style="top:1129.22px;font-size:19.5px;line-height:19.5px;color:#252423;left:1367.0px;transform:scaleX(1.1114);transform-origin:0 0;">1 to 25 of 76</div>
<div class="a" style="left:21px;top:1px;width:8px;height:18px;background:#949494;"></div>
<div class="a" style="left:25px;top:3px;width:16px;height:4px;background:#949494;"></div>
<div class="a" style="left:23px;top:3px;width:2px;height:17px;background:#c8c8c8;"></div>
<div class="a" style="left:21px;top:1px;width:20px;height:2px;background:#b4b4b4;"></div>
<div class="a" style="left:0px;top:1px;width:21px;height:12px;background:linear-gradient(rgba(0,0,0,0.1),rgba(0,0,0,0));"></div>
<div class="a" style="left:21px;top:1149px;width:4px;height:17px;background:#9a9a9a;"></div>
<div class="a" style="left:21px;top:1161px;width:20px;height:4px;background:#9a9a9a;"></div>
<div class="a" style="left:2061px;top:1161px;width:16px;height:4px;background:#9a9a9a;"></div>
<div class="a" style="left:2073px;top:1149px;width:4px;height:16px;background:#9a9a9a;"></div>
<div class="a" style="left:21px;top:572px;width:8px;height:24px;background:#9a9a9a;"></div>
<div class="a" style="left:2073px;top:572px;width:4px;height:24px;background:#9a9a9a;"></div>
<div class="a" style="left:1039px;top:1161px;width:24px;height:4px;background:#9a9a9a;"></div>
<div class="a" style="left:1039px;top:3px;width:24px;height:4px;background:#9a9a9a;"></div>
</body></html>
